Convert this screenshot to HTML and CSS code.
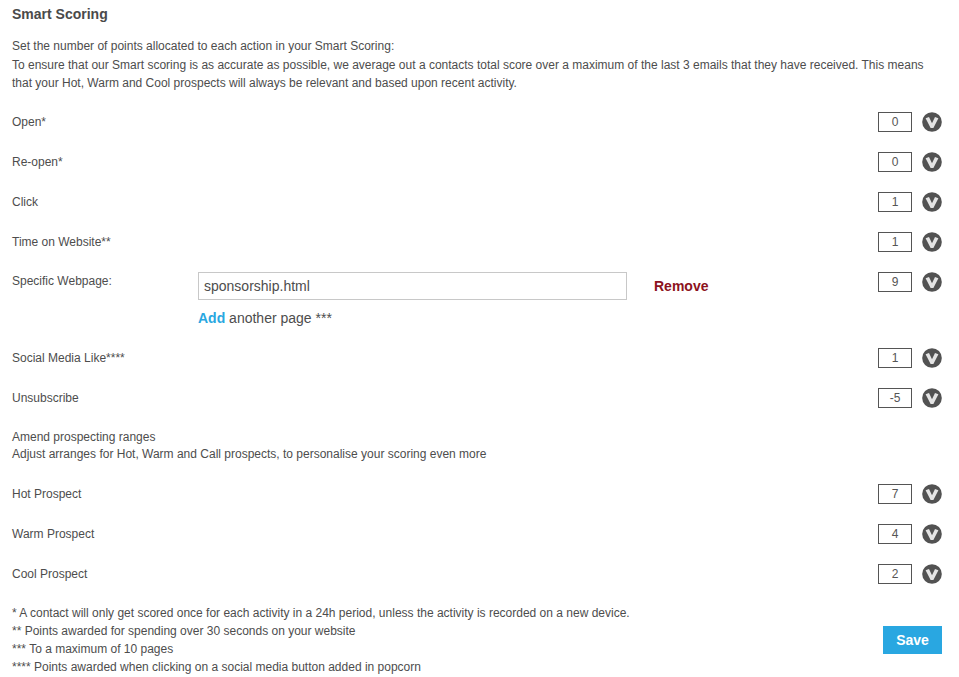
FILE: index.html
```html
<!DOCTYPE html>
<html lang="en">
<head>
<meta charset="utf-8">
<title>Smart Scoring</title>
<link rel="stylesheet" href="styles.css">
</head>
<body>
<svg class="defs" width="0" height="0" aria-hidden="true">
  <symbol id="chev" viewBox="0 0 20 20">
    <circle cx="10" cy="10" r="9.8" fill="#525252"/>
    <path d="M3.6 6.2 L7 4.9 L10 11.2 L13 4.9 L16.4 6.2 L11.4 16 L8.6 16 Z" fill="#e4e4e4"/>
  </symbol>
</svg>
<main class="page">
  <h1 class="title">Smart Scoring</h1>
  <p class="intro">Set the number of points allocated to each action in your Smart Scoring:<br>To ensure that our Smart scoring is as accurate as possible, we average out a contacts total score over a maximum of the last 3 emails that they have received. This means that your Hot, Warm and Cool prospects will always be relevant and based upon recent activity.</p>

  <div class="row"><span class="label">Open*</span><span class="score">0</span><svg class="chev"><use href="#chev"/></svg></div>
  <div class="row"><span class="label">Re-open*</span><span class="score">0</span><svg class="chev"><use href="#chev"/></svg></div>
  <div class="row"><span class="label">Click</span><span class="score">1</span><svg class="chev"><use href="#chev"/></svg></div>
  <div class="row"><span class="label">Time on Website**</span><span class="score">1</span><svg class="chev"><use href="#chev"/></svg></div>

  <div class="row row-page">
    <span class="label label-page">Specific Webpage:</span>
    <div class="page-field">
      <div class="page-input">sponsorship.html</div>
      <div class="page-add"><a class="add">Add</a> another page ***</div>
    </div>
    <a class="remove">Remove</a>
    <span class="score">9</span><svg class="chev"><use href="#chev"/></svg>
  </div>

  <div class="row"><span class="label">Social Media Like****</span><span class="score">1</span><svg class="chev"><use href="#chev"/></svg></div>
  <div class="row"><span class="label">Unsubscribe</span><span class="score">-5</span><svg class="chev"><use href="#chev"/></svg></div>

  <p class="ranges">Amend prospecting ranges<br>Adjust arranges for Hot, Warm and Call prospects, to personalise your scoring even more</p>

  <div class="row"><span class="label">Hot Prospect</span><span class="score">7</span><svg class="chev"><use href="#chev"/></svg></div>
  <div class="row"><span class="label">Warm Prospect</span><span class="score">4</span><svg class="chev"><use href="#chev"/></svg></div>
  <div class="row"><span class="label">Cool Prospect</span><span class="score">2</span><svg class="chev"><use href="#chev"/></svg></div>

  <div class="foot">
    <p class="notes">* A contact will only get scored once for each activity in a 24h period, unless the activity is recorded on a new device.<br>** Points awarded for spending over 30 seconds on your website<br>*** To a maximum of 10 pages<br>**** Points awarded when clicking on a social media button added in popcorn</p>
    <button class="save" type="button">Save</button>
  </div>
</main>
</body>
</html>
```
FILE: styles.css
```css
html, body { margin: 0; padding: 0; background: #fff; }
body { font-family: "Liberation Sans", Arial, sans-serif; font-size: 12px; color: #4d4d4d; height: 677px; overflow: hidden; }
.defs { position: absolute; }
.page { padding: 6px 17px 0 12px; }
.title { margin: 0; font-size: 14px; line-height: 16px; font-weight: bold; color: #4a4a4a; }
.intro { margin: 15px 0 0; line-height: 18.5px; }
.row { display: flex; align-items: center; height: 40px; }
.intro + .row { margin-top: 9px; }
.label { flex: 1; }
.score { box-sizing: border-box; width: 34px; height: 20px; border: 1px solid #555; text-align: center; line-height: 18px; color: #555; }
.chev { width: 20px; height: 20px; margin-left: 10px; flex: none; }
.row-page { height: 76px; align-items: flex-start; padding-top: 10px; box-sizing: border-box; }
.label-page { flex: none; width: 186px; line-height: 18px; }
.page-field { width: 429px; }
.page-input { box-sizing: border-box; height: 28px; border: 1px solid #c8c8c8; padding: 0 5px; font-size: 14px; line-height: 26px; }
.page-add { margin-top: 10px; font-size: 14px; line-height: 16px; }
.add { color: #29a7e1; font-weight: bold; }
.remove { margin-left: 27px; flex: 1; color: #8c1220; font-size: 14px; font-weight: bold; line-height: 28px; }
.ranges { margin: 11px 0 0; line-height: 17.5px; }
.ranges + .row { margin-top: 10px; }
.foot { display: flex; align-items: flex-end; justify-content: space-between; margin-top: 10px; }
.notes { margin: 0; line-height: 18px; }
.save { box-sizing: border-box; width: 59px; height: 28px; margin-bottom: 22px; padding: 0; border: 0; background: #29a7e1; color: #fff; font: bold 14px "Liberation Sans", Arial, sans-serif; }
```
